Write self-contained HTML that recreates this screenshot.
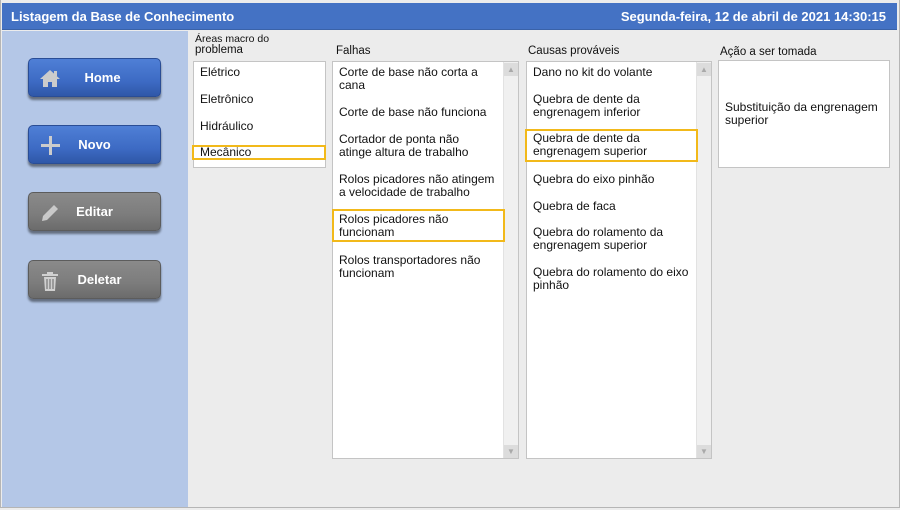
<!DOCTYPE html>
<html><head><meta charset="utf-8"><style>
*{margin:0;padding:0;box-sizing:border-box}
body{width:900px;height:510px;background:#ececec;font-family:"Liberation Sans",Arial,sans-serif;position:relative;overflow:hidden;color:#111}
.frame{position:absolute;left:0;top:0;width:900px;height:508px;border:1px solid #b5b5b5;border-top:none}
.title{position:absolute;left:2px;top:3px;width:895px;height:27px;background:#4472c4;color:#fff;font-weight:bold;font-size:13px;line-height:27px;padding:0 9px;border-bottom:1px solid #3a62a8}
.title span{position:absolute;right:11px;top:0}
.side{position:absolute;left:2px;top:31px;width:186px;height:476px;background:#b4c7e7}
.btn{position:absolute;left:28px;width:133px;height:39px;border-radius:5px;color:#fff;font-weight:bold;font-size:13px;line-height:38px;box-shadow:0 3px 2px rgba(0,0,0,.45)}
.blue{background:linear-gradient(#4f7fd6,#3d6bc4 60%,#2f57a8);border:1px solid #2a4d95}
.gray{background:linear-gradient(#8a8a8a,#7c7c7c 60%,#6b6b6b);border:1px solid #5c5c5c}
.btn b{position:absolute;left:0;right:0;text-align:center}
.btn svg{position:absolute;left:10px;top:9px}
.lbl{position:absolute;font-size:11.5px}
.box{position:absolute;background:#fff;border:1px solid #c4c4c4}
.it{position:absolute;font-size:12px;line-height:13px;left:6px;white-space:nowrap}
.sel{position:absolute;border:2px solid #f2b91a}
.sb{position:absolute;width:15px;background:#f0f0f0;border-left:1px solid #e2e2e2}
.arr{position:absolute;left:0;width:14px;height:13px;background:#dcdcdc;color:#a9a9a9;font-size:8px;text-align:center;line-height:13px}
</style></head><body>
<div class="frame"></div>
<div class="title">Listagem da Base de Conhecimento<span>Segunda-feira, 12 de abril de 2021 14:30:15</span></div>
<div class="side"></div>
<div class="btn blue" style="top:58px"><svg width="22" height="20" viewBox="0 0 22 20"><path d="M11 2L1 11h3v8h5v-5h4v5h5v-8h3z" fill="#ccc"/><rect x="15" y="3" width="3" height="5" fill="#ccc"/></svg><b style="left:16px">Home</b></div>
<div class="btn blue" style="top:125px"><svg width="22" height="20" viewBox="0 0 22 20"><path d="M10 1h3v8h8v3h-8v8h-3v-8H2V9h8z" fill="#ccc"/></svg><b style="left:0">Novo</b></div>
<div class="btn gray" style="top:192px"><svg width="22" height="22" viewBox="0 0 22 22"><path d="M3 19l1-5L15 3l4 4L8 18z" fill="#c9c9c9"/></svg><b style="left:0">Editar</b></div>
<div class="btn gray" style="top:260px"><svg width="22" height="22" viewBox="0 0 22 22"><path d="M3 4h16v2H3zM8 2h6v2H8zM5 7h12l-1 14H6z" fill="#d0d0d0"/><path d="M8 9v10M11 9v10M14 9v10" stroke="#777" stroke-width="1.2"/></svg><b style="left:10px">Deletar</b></div>

<div class="lbl" style="left:195px;top:34px;font-size:10.5px;line-height:11px">Áreas macro do<br><span style="font-size:11.5px">problema</span></div>
<div class="box" style="left:193px;top:61px;width:133px;height:107px">
<div class="it" style="top:4px">Elétrico</div>
<div class="it" style="top:31px">Eletrônico</div>
<div class="it" style="top:58px">Hidráulico</div>
<div class="it" style="top:84px">Mecânico</div>
</div>
<div class="sel" style="left:192px;top:145px;width:134px;height:15px"></div>

<div class="lbl" style="left:336px;top:45px">Falhas</div>
<div class="box" style="left:332px;top:61px;width:187px;height:398px">
<div class="it" style="top:4px">Corte de base não corta a<br>cana</div>
<div class="it" style="top:44px">Corte de base não funciona</div>
<div class="it" style="top:71px">Cortador de ponta não<br>atinge altura de trabalho</div>
<div class="it" style="top:111px">Rolos picadores não atingem<br>a velocidade de trabalho</div>
<div class="it" style="top:151px">Rolos picadores não<br>funcionam</div>
<div class="it" style="top:192px">Rolos transportadores não<br>funcionam</div>
<div class="sb" style="left:170px;top:0;height:396px"><div class="arr" style="top:1px">▲</div><div class="arr" style="bottom:0">▼</div></div>
</div>
<div class="sel" style="left:332px;top:209px;width:173px;height:33px"></div>

<div class="lbl" style="left:528px;top:45px">Causas prováveis</div>
<div class="box" style="left:526px;top:61px;width:186px;height:398px">
<div class="it" style="top:4px">Dano no kit do volante</div>
<div class="it" style="top:31px">Quebra de dente da<br>engrenagem inferior</div>
<div class="it" style="top:70px">Quebra de dente da<br>engrenagem superior</div>
<div class="it" style="top:111px">Quebra do eixo pinhão</div>
<div class="it" style="top:138px">Quebra de faca</div>
<div class="it" style="top:164px">Quebra do rolamento da<br>engrenagem superior</div>
<div class="it" style="top:204px">Quebra do rolamento do eixo<br>pinhão</div>
<div class="sb" style="left:169px;top:0;height:396px"><div class="arr" style="top:1px">▲</div><div class="arr" style="bottom:0">▼</div></div>
</div>
<div class="sel" style="left:525px;top:129px;width:173px;height:33px"></div>

<div class="lbl" style="left:720px;top:46px">Ação a ser tomada</div>
<div class="box" style="left:718px;top:60px;width:172px;height:108px">
<div class="it" style="top:40px">Substituição da engrenagem<br>superior</div>
</div>
</body></html>
